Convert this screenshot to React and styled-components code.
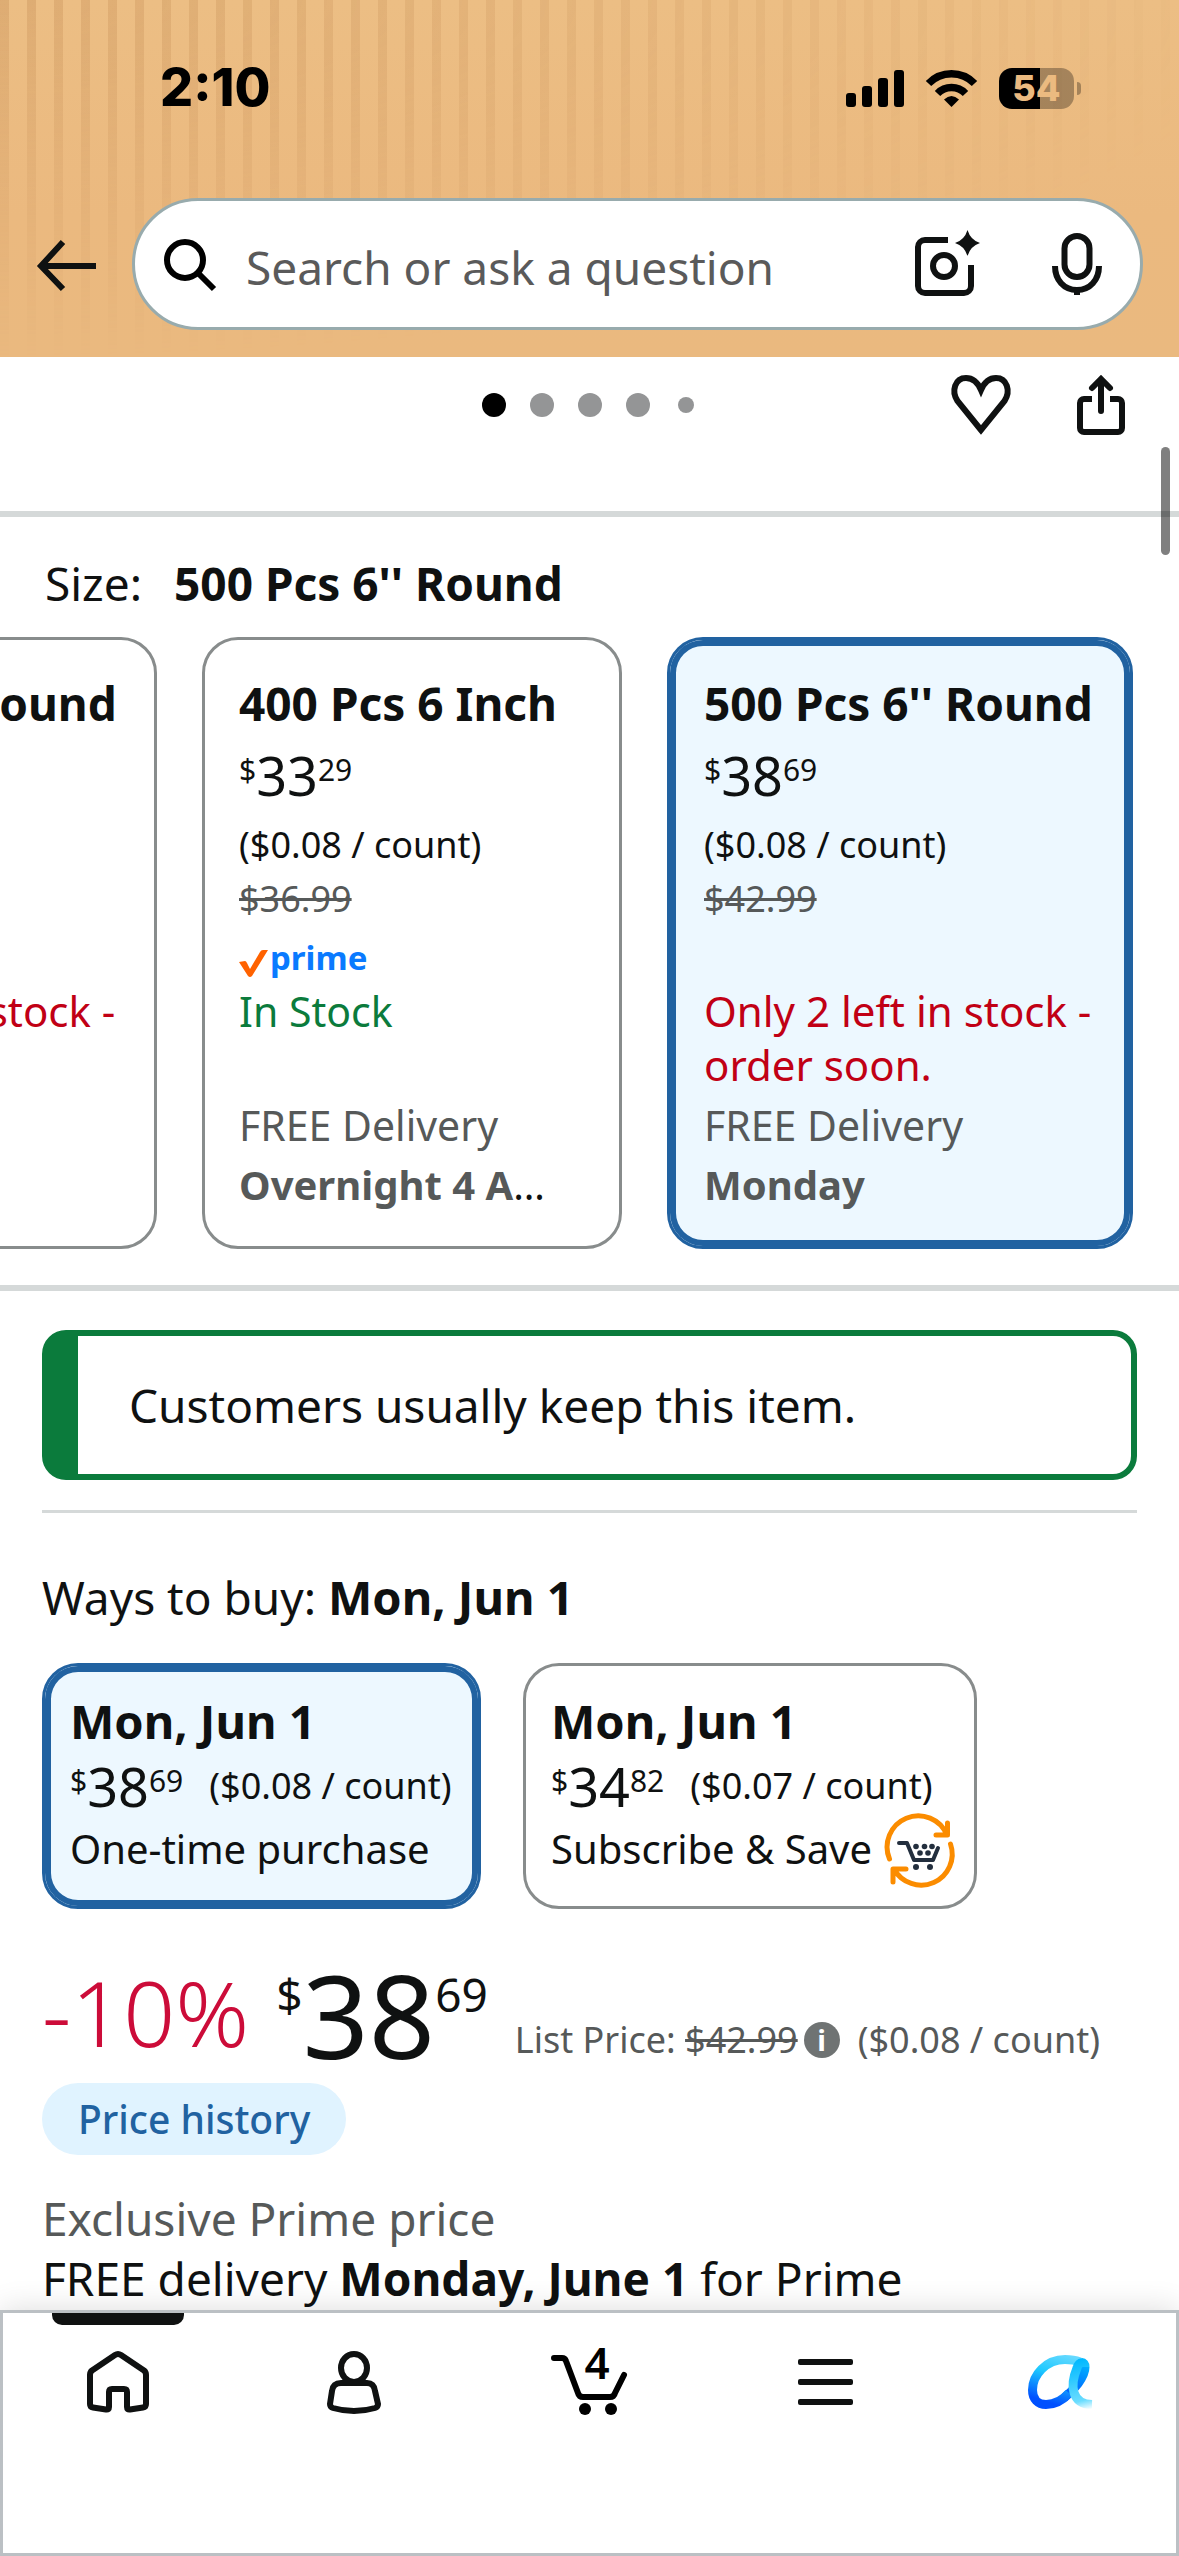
import React, { useState } from 'react';
import styled, { createGlobalStyle, css } from 'styled-components';

const GlobalStyle = createGlobalStyle`
  * {
    box-sizing: border-box;
  }

  body {
    margin: 0;
    background: #ffffff;
    color: #0f1111;
    font-family: 'Noto Sans', 'Open Sans', sans-serif;
    font-size: 46px;
    line-height: 60px;
  }

  button,
  input {
    margin: 0;
    padding: 0;
    border: 0;
    background: none;
    color: inherit;
    font: inherit;
    text-align: left;
  }

  p,
  h2 {
    margin: 0;
    font-size: inherit;
    font-weight: inherit;
  }

  svg {
    display: block;
    flex-shrink: 0;
    overflow: visible;
  }
`;

const Page = styled.div`
  min-height: 100vh;
  display: flex;
  flex-direction: column;
  overflow-x: clip;
`;

/* ---------- header ---------- */

const Header = styled.header`
  position: relative;
  padding-bottom: 27px;
  background: linear-gradient(to bottom, #ecbe84, #ebb97f 60%, #eab97f);

  /* corrugated stripes, strongest in the top left corner */
  &::before {
    content: '';
    position: absolute;
    inset: 0;
    background: repeating-linear-gradient(
      to right,
      rgba(196, 140, 84, 0.34) 0 9px,
      transparent 9px 27px
    );
    mask-image: radial-gradient(ellipse 108% 100% at 0 0, #000, transparent);
  }
`;

const StatusBar = styled.div`
  position: relative;
  display: flex;
  align-items: center;
  justify-content: space-between;
  height: 176px;
  padding: 0 98px 0 160px;
  color: #000000;
  font-family: Inter, sans-serif;
`;

const Time = styled.span`
  font-size: 52px;
  font-weight: 800;
`;

const StatusIcons = styled.div`
  display: flex;
  align-items: center;
  gap: 22px;
`;

const BatteryWrap = styled.div`
  display: flex;
  align-items: center;
  gap: 3px;
`;

const BatteryBody = styled.span`
  width: 75px;
  height: 41px;
  border-radius: 13px;
  background: linear-gradient(to right, #000000 55%, rgba(0, 0, 0, 0.3) 55%);
  color: #ebba80;
  font-size: 36px;
  font-weight: 800;
  line-height: 41px;
  text-align: center;
`;

const BatteryTip = styled.span`
  width: 4px;
  height: 13px;
  border-radius: 0 4px 4px 0;
  background: rgba(0, 0, 0, 0.3);
`;

const SearchRow = styled.div`
  position: relative;
  display: flex;
  align-items: center;
  gap: 36px;
  margin-top: 22px;
  padding: 0 36px;
`;

const SearchPill = styled.form`
  flex: 1;
  min-width: 0;
  display: flex;
  align-items: center;
  gap: 30px;
  height: 132px;
  padding: 0 38px 0 29px;
  border: 3px solid #98abad;
  border-radius: 66px;
  background: #ffffff;
`;

const SearchInput = styled.input`
  flex: 1;
  min-width: 0;
  padding-top: 6px;
  outline: none;

  &::placeholder {
    color: #5a5a5a;
    opacity: 1;
  }
`;

const SearchTools = styled.div`
  display: flex;
  align-items: center;
  gap: 72px;
`;

/* ---------- gallery bar ---------- */

const GalleryBar = styled.div`
  display: grid;
  grid-template-columns: 1fr auto 1fr;
  align-items: start;
  height: 160px;
  padding: 18px 54px 0 50px;
  border-bottom: 6px solid #d5d9d9;
`;

const Dots = styled.div`
  grid-column: 2;
  display: flex;
  align-items: center;
  gap: 24px;
  height: 60px;
`;

const Dot = styled.span`
  width: ${({ $small }) => ($small ? 16 : 24)}px;
  height: ${({ $small }) => ($small ? 16 : 24)}px;
  margin-left: ${({ $small }) => ($small ? 4 : 0)}px;
  border-radius: 50%;
  background: ${({ $active }) => ($active ? '#000000' : '#949596')};
`;

const GalleryActions = styled.div`
  display: flex;
  justify-content: flex-end;
  gap: 66px;
`;

const ScrollThumb = styled.div`
  position: fixed;
  top: 447px;
  right: 9px;
  width: 9px;
  height: 108px;
  border-radius: 5px;
  background: rgba(0, 0, 0, 0.5);
`;

/* ---------- shared card parts ---------- */

const optionFrame = css`
  border: 3px solid #888c8c;
  border-radius: 36px;
  background: #ffffff;

  ${({ $selected }) =>
    $selected &&
    css`
      border-color: #2162a1;
      background: #edf8ff;
      box-shadow: inset 0 0 0 6px #2162a1;
    `}
`;

const PriceText = styled.span`
  display: block;
  font-size: ${({ $large }) => ($large ? 116 : 54)}px;
  line-height: ${({ $large, $lead }) => ($large ? 130 : $lead)}px;
  white-space: nowrap;
`;

const PriceSup = styled.span`
  font-size: ${({ $large }) => ($large ? 46 : 30)}px;
  line-height: 1;
  vertical-align: ${({ $large }) => ($large ? 47 : 15)}px;
`;

const SmallText = styled.span`
  display: block;
  color: ${({ $muted }) => ($muted ? '#565959' : 'inherit')};
  font-size: 36px;
  line-height: 54px;
  white-space: nowrap;
`;

/* ---------- size picker ---------- */

const SizeSection = styled.section`
  padding: 36px 0;
  border-bottom: 6px solid #d5d9d9;
`;

const SizeHeading = styled.h2`
  display: flex;
  gap: 32px;
  padding: 0 45px;
  margin-bottom: 24px;
`;

const SizeTrack = styled.div`
  display: flex;
  justify-content: flex-end;
  gap: 45px;
  padding-right: 46px;
  overflow: hidden;
`;

const SizeCard = styled.button`
  ${optionFrame}
  flex: 0 0 ${({ $wide }) => ($wide ? 466 : 420)}px;
  min-width: 0;
  display: block;
  padding: 33px 38px 31px 34px;
`;

const SizeName = styled.span`
  display: block;
  font-weight: 700;
  white-space: nowrap;
`;

const PrimeLine = styled.span`
  display: flex;
  align-items: center;
  gap: 2px;
  height: 58px;
  padding-top: 6px;
  color: #0a7aff;
  font-size: 33px;
  font-weight: 700;
  line-height: 52px;

  svg {
    margin-top: 10px;
  }
`;

const Stock = styled.span`
  display: block;
  min-height: 108px;
  margin-bottom: 3px;
  color: ${({ $low }) => ($low ? '#c10015' : '#0b7b3c')};
  font-size: ${({ $low }) => ($low ? 42 : 41)}px;
  line-height: 54px;
`;

const Delivery = styled.span`
  display: block;
  overflow: hidden;
  font-size: ${({ $bold }) => ($bold ? 40 : 41)}px;
  line-height: 60px;
  text-overflow: ellipsis;
  white-space: nowrap;

  span {
    color: #565959;
    font-weight: ${({ $bold }) => ($bold ? 700 : 400)};
  }
`;

/* ---------- buy box ---------- */

const BuySection = styled.section`
  padding: 39px 42px 0;
`;

const KeepNotice = styled.p`
  padding: 39px 51px;
  border: 6px solid #0b7b3c;
  border-left-width: 36px;
  border-radius: 24px;
`;

const Rule = styled.hr`
  height: 3px;
  margin: 30px 0 54px;
  border: 0;
  background: #d5d9d9;
`;

const WaysHeading = styled.h2`
  b {
    font-size: 47px;
  }
`;

const WaysRow = styled.div`
  display: flex;
  gap: 42px;
  margin-top: 36px;
`;

const WayCard = styled.button`
  ${optionFrame}
  flex: 0 0 ${({ $wide }) => ($wide ? 454 : 439)}px;
  padding: 28px 0 32px 25px;
`;

const WayDate = styled.span`
  display: block;
  font-size: 47px;
  font-weight: 700;
  line-height: 54px;
`;

const WayPrice = styled.span`
  display: flex;
  align-items: center;
  gap: 26px;
  height: 76px;
`;

const WayKind = styled.span`
  display: flex;
  align-items: center;
  gap: 14px;
  height: 50px;
  font-size: 40px;
  white-space: nowrap;

  svg {
    margin-top: 6px;
  }
`;

const PriceRow = styled.div`
  display: flex;
  align-items: flex-start;
  gap: 27px;
  height: 134px;
  margin-top: 40px;
`;

const Discount = styled.span`
  color: #cc0c39;
  font-size: 91px;
  font-weight: 300;
  line-height: 126px;
`;

const ListPrice = styled.div`
  align-self: flex-end;
  display: flex;
  align-items: center;
  gap: 18px;
  padding-bottom: 16px;
`;

const ListPriceValue = styled.span`
  display: flex;
  align-items: center;
  gap: 6px;
`;

const InfoButton = styled.button`
  width: 36px;
  height: 36px;
  border-radius: 50%;
  background: #6f7373;
  color: #ffffff;
  font-size: 29px;
  font-weight: 700;
  line-height: 34px;
  text-align: center;
`;

const HistoryChip = styled.button`
  display: block;
  height: 72px;
  margin-bottom: 33px;
  padding: 0 36px;
  border-radius: 36px;
  background: #e0f3ff;
  color: #2162a1;
  font-size: 39px;
  font-weight: 500;
`;

const PrimeNote = styled.p`
  color: #565959;
`;

/* ---------- bottom navigation ---------- */

const BottomNav = styled.nav`
  position: sticky;
  bottom: 0;
  display: grid;
  grid-template-columns: repeat(5, 1fr);
  align-items: start;
  height: 246px;
  margin-top: auto;
  background: #ffffff;
  box-shadow: inset 0 0 0 3px #bbc0c4, 0 0 30px rgba(15, 17, 17, 0.14);
`;

const NavButton = styled.button`
  position: relative;
  display: flex;
  align-items: center;
  justify-content: center;
  height: 144px;

  ${({ $current }) =>
    $current &&
    css`
      &::before {
        content: '';
        position: absolute;
        top: 3px;
        left: calc(50% - 66px);
        width: 132px;
        height: 12px;
        border-radius: 0 0 10px 10px;
        background: #0f1111;
      }
    `}
`;

const CartCount = styled.span`
  position: absolute;
  top: 25px;
  left: calc(50% - 5px);
  color: #000000;
  font-size: 44px;
  font-weight: 600;
  line-height: 54px;
`;

/* ---------- icons ---------- */

const Svg = ({ w, h, children, stroke = '#0f1111', strokeWidth = 6, ...rest }) => (
  <svg
    width={w}
    height={h}
    viewBox={`0 0 ${w} ${h}`}
    fill="none"
    stroke={stroke}
    strokeWidth={strokeWidth}
    aria-hidden="true"
    {...rest}
  >
    {children}
  </svg>
);

const SignalIcon = () => (
  <Svg w={58} h={37} stroke="none" fill="#000">
    <rect x="0" y="23" width="10" height="14" rx="3" />
    <rect x="16" y="16" width="10" height="21" rx="3" />
    <rect x="32" y="8" width="10" height="29" rx="3" />
    <rect x="48" y="0" width="10" height="37" rx="3" />
  </Svg>
);

const WifiIcon = () => (
  <Svg w={51} h={37} stroke="#000" strokeWidth={7.5}>
    <path d="M2.500 13.500A32 32 0 0 1 48.500 13.500" />
    <path d="M11.500 23.500A19.500 19.500 0 0 1 39.500 23.500" />
    <path d="M18 29.500q7.500-7 15 0L25.500 37z" fill="#000" stroke="none" />
  </Svg>
);

const BackIcon = () => (
  <Svg w={60} h={52}>
    <path d="M60 28H4M27 4L5 28l22 23" />
  </Svg>
);

const SearchIcon = () => (
  <Svg w={52} h={52} stroke="#000">
    <circle cx="21" cy="22" r="18" />
    <path d="M34 35l16 16" />
  </Svg>
);

const LensIcon = () => (
  <Svg w={65} h={65}>
    <path d="M33 8H10a7 7 0 0 0-7 7v39a7 7 0 0 0 7 7h39a7 7 0 0 0 7-7V33" />
    <circle cx="29" cy="34" r="11" />
    <path
      d="M52.500-2q3 10 12.500 13q-9.500 3-12.500 13q-3-10-12.500-13q9.500-3 12.500-13z"
      fill="#0f1111"
      stroke="none"
    />
  </Svg>
);

const MicIcon = () => (
  <Svg w={50} h={62}>
    <rect x="12.500" y="3" width="25" height="41" rx="12.500" />
    <path d="M3 33c0 14 9 24 22 24s22-10 22-24M25 56v6" />
  </Svg>
);

const HeartIcon = () => (
  <Svg w={60} h={60}>
    <path d="M30 55L6.500 26C0 16 4 3 15 3c7 0 12 5 15 12C33 8 38 3 45 3c11 0 15 13 8.500 23z" />
  </Svg>
);

const ShareIcon = () => (
  <Svg w={48} h={60}>
    <path d="M15 24H7a4 4 0 0 0-4 4v25a4 4 0 0 0 4 4h34a4 4 0 0 0 4-4V28a4 4 0 0 0-4-4h-8" />
    <path d="M24 36V5M15 13l9-9 9 9" strokeLinecap="round" />
  </Svg>
);

const PrimeCheck = () => (
  <Svg w={29} h={27} stroke="none" fill="#ff6200">
    <path d="M0 12l6-1q1 0 2 2l3 6L21 2q1-2 3-2h5L13 26q-2 2-4 0z" />
  </Svg>
);

const RepeatCartIcon = () => (
  <Svg w={68} h={68} stroke="#fb8c00" strokeWidth={5} strokeLinecap="round" strokeLinejoin="round">
    <path d="M3.500 41A31 31 0 0 1 61 17M61.500 5v12H50" />
    <path d="M64.500 26A31 31 0 0 1 8 51M20 51H7v13" />
    <path d="M13 25h8l7 17h19l5-12" stroke="#232f3e" strokeWidth="4" />
    <g fill="#232f3e" stroke="none">
      <circle cx="30" cy="49" r="3" />
      <circle cx="44" cy="49" r="3" />
      <circle cx="30" cy="28.500" r="2.800" />
      <circle cx="38.500" cy="28.500" r="2.800" />
      <circle cx="46" cy="28.500" r="2.800" />
      <circle cx="34" cy="35" r="2.800" />
      <circle cx="42" cy="35" r="2.800" />
    </g>
  </Svg>
);

const HomeIcon = () => (
  <Svg w={62} h={62} strokeLinejoin="round">
    <path d="M28 4L5 19.500Q3 21 3 24v29q0 3 3 3.500l13 2q3 .5 3-2.500V41q0-3 3-3h12q3 0 3 3v15q0 3 3 2.500l13-2q3-.5 3-3.500V24q0-3-2-4.500L34 4q-3-2-6 0z" />
  </Svg>
);

const PersonIcon = () => (
  <Svg w={54} h={63}>
    <ellipse cx="27" cy="17" rx="13" ry="14" />
    <path d="M14 32h26q7 0 8 8l3 13q0 3-3 4-10 3-21 3T6 57q-3-1-3-4l2-13q1-8 9-8z" />
  </Svg>
);

const CartIcon = () => (
  <Svg w={77} h={66} stroke="#000" strokeLinecap="round" strokeLinejoin="round">
    <path d="M3 9h8q3 0 4 3l12 32q1 4 5 4h27q4 0 5-4l9-18" />
    <circle cx="34" cy="60" r="6" fill="#000" stroke="none" />
    <circle cx="60" cy="60" r="6" fill="#000" stroke="none" />
  </Svg>
);

const MenuIcon = () => (
  <Svg w={55} h={46} stroke="none" fill="#0f1111">
    <rect y="0" width="55" height="6" rx="2" />
    <rect y="20" width="55" height="6" rx="2" />
    <rect y="40" width="55" height="6" rx="2" />
  </Svg>
);

const AssistantIcon = () => (
  <Svg w={66} h={54} strokeWidth={9}>
    <defs>
      <linearGradient id="bowl" x1="40" y1="0" x2="24" y2="54" gradientUnits="userSpaceOnUse">
        <stop offset="0" stopColor="#66d9ff" />
        <stop offset="0.4" stopColor="#1cc8ff" />
        <stop offset="0.9" stopColor="#0050ff" />
      </linearGradient>
      <linearGradient id="rise" x1="40" y1="44" x2="57" y2="8" gradientUnits="userSpaceOnUse">
        <stop offset="0" stopColor="#0050ff" />
        <stop offset="1" stopColor="#00b4ff" />
      </linearGradient>
      <linearGradient id="tail" x1="52" y1="4" x2="64" y2="54" gradientUnits="userSpaceOnUse">
        <stop offset="0" stopColor="#00b8ff" />
        <stop offset="0.35" stopColor="#2cc8ff" />
        <stop offset="0.8" stopColor="#6bddff" />
        <stop offset="1" stopColor="#6bddff" stopOpacity="0" />
      </linearGradient>
    </defs>
    <path d="M36 43C46 35 57 22 57 12" stroke="url(#rise)" />
    <path
      d="M52 7C47 5 42 4.500 37 4.500C18 4.500 4.500 20 4.500 35C4.500 44 10 49.500 18 49.500C27 49.500 34 46 41 38"
      stroke="url(#bowl)"
    />
    <path d="M57 12C57 6 51 6 49 13C42 30 43 49 64 49.500" stroke="url(#tail)" />
  </Svg>
);

/* ---------- data ---------- */

const sizes = [
  {
    name: "300 Pcs 6'' Round",
    dollars: '26',
    cents: '99',
    unit: '($0.09 / count)',
    was: '$29.99',
    low: true,
    stock: 'Only 3 left in stock - order soon.',
    delivery: 'Monday',
    wide: true,
  },
  {
    name: '400 Pcs 6 Inch',
    dollars: '33',
    cents: '29',
    unit: '($0.08 / count)',
    was: '$36.99',
    prime: true,
    stock: 'In Stock',
    delivery: 'Overnight 4 AM - 8 AM',
  },
  {
    name: "500 Pcs 6'' Round",
    dollars: '38',
    cents: '69',
    unit: '($0.08 / count)',
    was: '$42.99',
    low: true,
    stock: 'Only 2 left in stock - order soon.',
    delivery: 'Monday',
    wide: true,
  },
];

const ways = [
  { dollars: '38', cents: '69', unit: '($0.08 / count)', kind: 'One-time purchase' },
  { dollars: '34', cents: '82', unit: '($0.07 / count)', kind: 'Subscribe & Save', repeat: true },
];

const Price = ({ dollars, cents, large, lead }) => (
  <PriceText $large={large} $lead={lead}>
    <PriceSup $large={large}>$</PriceSup>
    {dollars}
    <PriceSup $large={large}>{cents}</PriceSup>
  </PriceText>
);

const App = () => {
  const [size, setSize] = useState(2);
  const [way, setWay] = useState(0);

  return (
    <Page>
      <GlobalStyle />

      <Header>
        <StatusBar>
          <Time>2:10</Time>
          <StatusIcons>
            <SignalIcon />
            <WifiIcon />
            <BatteryWrap>
              <BatteryBody>54</BatteryBody>
              <BatteryTip />
            </BatteryWrap>
          </StatusIcons>
        </StatusBar>
        <SearchRow>
          <button type="button" aria-label="Back">
            <BackIcon />
          </button>
          <SearchPill onSubmit={(e) => e.preventDefault()}>
            <SearchIcon />
            <SearchInput
              type="text"
              aria-label="Search or ask a question"
              placeholder="Search or ask a question"
            />
            <SearchTools>
              <button type="button" aria-label="Search by photo">
                <LensIcon />
              </button>
              <button type="button" aria-label="Search by voice">
                <MicIcon />
              </button>
            </SearchTools>
          </SearchPill>
        </SearchRow>
      </Header>

      <main>
        <GalleryBar>
          <Dots>
            <Dot $active />
            <Dot />
            <Dot />
            <Dot />
            <Dot $small />
          </Dots>
          <GalleryActions>
            <button type="button" aria-label="Add to list">
              <HeartIcon />
            </button>
            <button type="button" aria-label="Share">
              <ShareIcon />
            </button>
          </GalleryActions>
        </GalleryBar>

        <SizeSection>
          <SizeHeading>
            Size: <b>{sizes[size].name}</b>
          </SizeHeading>
          <SizeTrack>
            {sizes.map((item, index) => (
              <SizeCard
                key={item.name}
                type="button"
                $wide={item.wide}
                $selected={index === size}
                aria-pressed={index === size}
                onClick={() => setSize(index)}
              >
                <SizeName>{item.name}</SizeName>
                <Price dollars={item.dollars} cents={item.cents} lead={85} />
                <SmallText>{item.unit}</SmallText>
                <SmallText $muted>
                  <s>{item.was}</s>
                </SmallText>
                <PrimeLine>
                  {item.prime && (
                    <>
                      <PrimeCheck />
                      prime
                    </>
                  )}
                </PrimeLine>
                <Stock $low={item.low}>{item.stock}</Stock>
                <Delivery>
                  <span>FREE Delivery</span>
                </Delivery>
                <Delivery $bold>
                  <span>{item.delivery}</span>
                </Delivery>
              </SizeCard>
            ))}
          </SizeTrack>
        </SizeSection>

        <BuySection>
          <KeepNotice>Customers usually keep this item.</KeepNotice>
          <Rule />
          <WaysHeading>
            Ways to buy: <b>Mon, Jun 1</b>
          </WaysHeading>
          <WaysRow>
            {ways.map((item, index) => (
              <WayCard
                key={item.kind}
                type="button"
                $wide={item.repeat}
                $selected={index === way}
                aria-pressed={index === way}
                onClick={() => setWay(index)}
              >
                <WayDate>Mon, Jun 1</WayDate>
                <WayPrice>
                  <Price dollars={item.dollars} cents={item.cents} lead={76} />
                  <SmallText>{item.unit}</SmallText>
                </WayPrice>
                <WayKind>
                  {item.kind}
                  {item.repeat && <RepeatCartIcon />}
                </WayKind>
              </WayCard>
            ))}
          </WaysRow>

          <PriceRow>
            <Discount>-10%</Discount>
            <Price dollars="38" cents="69" large />
            <ListPrice>
              <ListPriceValue>
                <SmallText $muted>
                  List Price: <s>$42.99</s>
                </SmallText>
                <InfoButton type="button" aria-label="About the list price">
                  i
                </InfoButton>
              </ListPriceValue>
              <SmallText $muted>($0.08 / count)</SmallText>
            </ListPrice>
          </PriceRow>
          <HistoryChip type="button">Price history</HistoryChip>
          <PrimeNote>Exclusive Prime price</PrimeNote>
          <p>
            FREE delivery <b>Monday, June 1</b> for Prime
          </p>
        </BuySection>
      </main>

      <BottomNav>
        <NavButton type="button" aria-label="Home" $current>
          <HomeIcon />
        </NavButton>
        <NavButton type="button" aria-label="Account">
          <PersonIcon />
        </NavButton>
        <NavButton type="button" aria-label="Cart, 4 items">
          <CartIcon />
          <CartCount>4</CartCount>
        </NavButton>
        <NavButton type="button" aria-label="Menu">
          <MenuIcon />
        </NavButton>
        <NavButton type="button" aria-label="Assistant">
          <AssistantIcon />
        </NavButton>
      </BottomNav>

      <ScrollThumb />
    </Page>
  );
};

export default App;
